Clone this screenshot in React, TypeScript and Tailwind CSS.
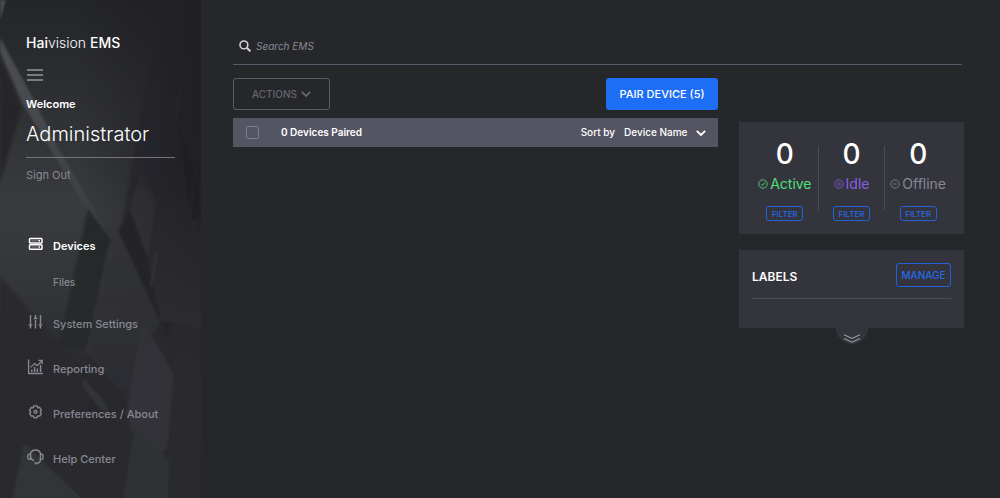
import type { ReactNode } from "react"
import { useState } from "react"
import clsx from "clsx"

interface NavItem {
  label: string
  icon: ReactNode
  children?: string[]
}

const navItems: NavItem[] = [
  { label: "Devices", icon: <DevicesIcon />, children: ["Files"] },
  { label: "System Settings", icon: <SlidersIcon /> },
  { label: "Reporting", icon: <ReportIcon /> },
  { label: "Preferences / About", icon: <GearIcon /> },
  { label: "Help Center", icon: <HeadsetIcon /> },
]

const stats = [
  { label: "Active", count: 0, color: "text-[#4fe07c]", icon: <path d="M4 6.2 5.5 7.8 8.2 4" /> },
  { label: "Idle", count: 0, color: "text-[#8a5fe6]", icon: <path d="M4.8 3.8v4.4M7.2 3.8v4.4" /> },
  { label: "Offline", count: 0, color: "text-[#888893]", icon: <path d="M4 6h4" /> },
]

function DevicesIcon() {
  return (
    <svg viewBox="0 0 20 20" className="size-5" fill="none" stroke="currentColor" strokeWidth="1.5">
      <rect x="3.5" y="4.5" width="12.5" height="4.6" rx="0.8" />
      <rect x="3.5" y="10.7" width="12.5" height="4.6" rx="0.8" />
      <path d="M5.5 6.8h6M5.5 13h6" strokeWidth="0.6" opacity="0.6" />
      <path d="M12.4 6.8h1.6M12.4 13h1.6" />
    </svg>
  )
}

function SlidersIcon() {
  return (
    <svg viewBox="0 0 20 20" className="size-5" fill="none" stroke="currentColor" strokeWidth="1.4">
      <path d="M4.5 3v9M4.5 14v2.5M9.5 3v3M9.5 8v8.5M14.5 3v9M14.5 14v2.5" />
      <path d="M2.2 12.2h4.6L4.5 15.2zM7.2 7.3h4.6L9.5 4.3zM12.2 12.2h4.6l-2.3 3z" fill="currentColor" stroke="none" />
    </svg>
  )
}

function ReportIcon() {
  return (
    <svg viewBox="0 0 20 20" className="size-5" fill="none" stroke="currentColor" strokeWidth="1.3">
      <path d="M2.6 2.5v14h14.2" />
      <path d="M5.8 15v-2.5M8.6 15v-5M11.4 15v-3.5M14.6 15V8" strokeWidth="1.5" />
      <path d="M4.6 10.4 8.6 6.6l2.6 2L15.8 4" />
      <path d="M12.4 3.4h3.8v3.8" />
    </svg>
  )
}

function GearIcon() {
  return (
    <svg viewBox="0 0 20 20" className="size-5" fill="none" stroke="currentColor" strokeWidth="1.4" strokeLinejoin="round">
      <path d="M8 3.9h3l.8 1.8 2-.2 1.6 2.6-1.2 1.7 1.2 1.7-1.6 2.6-2-.2-.8 1.8H8l-.8-1.8-2 .2-1.6-2.6 1.2-1.7-1.2-1.7 1.6-2.6 2 .2z" />
      <circle cx="9.5" cy="9.8" r="1.4" />
    </svg>
  )
}

function HeadsetIcon() {
  return (
    <svg viewBox="0 0 20 20" className="size-5" fill="none" stroke="currentColor" strokeWidth="1.4">
      <path d="M4.2 7.3a5.4 5.4 0 0 1 10.6 0" />
      <path d="M4.6 7.2v5.2H3.4a1.4 1.4 0 0 1-1.4-1.4V8.6a1.4 1.4 0 0 1 1.4-1.4zM14.4 7.2v5.2h1.2A1.4 1.4 0 0 0 17 11V8.6a1.4 1.4 0 0 0-1.4-1.4z" />
      <path d="M4.8 10.5c.6 1.8 1.8 2.8 3.2 3.4M14.6 12.4c-.3 2.4-1.8 3.8-4 4" />
      <path d="M8.6 16.4h2.2" strokeWidth="2" />
    </svg>
  )
}

function Chevron({ className }: { className?: string }) {
  return (
    <svg viewBox="0 0 10 6" className={clsx("h-1.5 w-2.5", className)} fill="none" stroke="currentColor" strokeWidth="1.8">
      <path d="M.8.8 5 5 9.2.8" />
    </svg>
  )
}

// Faceted glass artwork behind the navigation
function SidebarArt() {
  return (
    <svg
      viewBox="0 0 201 498"
      preserveAspectRatio="none"
      className="absolute inset-0 -z-10 size-full"
      aria-hidden="true"
    >
      <defs>
        <linearGradient id="base" x1="0" y1="0" x2="0" y2="1">
          <stop offset="0" stopColor="#242529" />
          <stop offset="0.42" stopColor="#393b3f" />
          <stop offset="0.6" stopColor="#323438" />
          <stop offset="0.75" stopColor="#29292c" />
          <stop offset="1" stopColor="#28292b" />
        </linearGradient>
        <linearGradient id="shade" x1="0" y1="0" x2="1" y2="0">
          <stop offset="0.4" stopColor="#1d1d21" stopOpacity="0" />
          <stop offset="1" stopColor="#1d1d21" stopOpacity="0.75" />
        </linearGradient>
        <linearGradient id="shadeFade" x1="0" y1="0" x2="0" y2="1">
          <stop offset="0" stopColor="#fff" />
          <stop offset="0.35" stopColor="#fff" />
          <stop offset="0.7" stopColor="#000" />
        </linearGradient>
        <mask id="shadeMask">
          <rect width="201" height="498" fill="url(#shadeFade)" />
        </mask>
        <linearGradient id="facet" x1="0" y1="0" x2="0" y2="1">
          <stop offset="0" stopColor="#36383c" />
          <stop offset="1" stopColor="#2a2b2e" />
        </linearGradient>
        <linearGradient id="streak" x1="0" y1="0" x2="0" y2="1">
          <stop offset="0" stopColor="#62656a" stopOpacity="0.6" />
          <stop offset="0.4" stopColor="#62656a" stopOpacity="0.45" />
          <stop offset="1" stopColor="#62656a" stopOpacity="0" />
        </linearGradient>
        <filter id="soft">
          <feGaussianBlur stdDeviation="0.8" />
        </filter>
      </defs>
      <rect width="201" height="498" fill="url(#base)" />
      <g filter="url(#soft)">
        <path d="M0 58 22 108 0 182z" fill="#26272b" />
        <path d="M0 38v14l22 50 64 106 28 34-58-98-24-48z" fill="url(#streak)" />
        <path d="M0 0h6L0 20z" fill="#4a4c50" />
        <path d="M0 276 60 346 90 380 80 498H0z" fill="#29292d" />
        <path d="m88 208 26 36-25 104H58z" fill="#28292c" />
        <path d="M156 30 119 240l-30 110 116 20V0h-40z" fill="#28292d" opacity="0.75" />
        <path d="m120 226-12 20-22 104 50 60 6-60 26-40z" fill="url(#facet)" />
        <path d="m130 210 11-43 15 34-7 54-2 0z" fill="#35363b" />
        <path d="m118 230 12-20 24 66 18 48-4 14z" fill="#26262a" />
        <path d="m160 200 30 8 11 40v80l-40-8-14-60z" fill="#2d2d31" />
        <path d="m155 66 22 48-16 86-30-18z" fill="#2c2d31" opacity="0.5" />
        <path d="m177 114 20 52 4 50-10 4z" fill="#222327" />
        <path d="m180 90-4 25 20 52-6 50 11 24" fill="none" stroke="#3a3b41" />
        <path d="m157 250-6 36" stroke="#3b3c42" strokeWidth="1.5" />
        <path d="m109 250-24 106" stroke="#34353a" />
        <path d="m84 378 20 22 6 14-12-8-16-22z" fill="#323437" />
        <path d="m138 345 4-26 32 54-6 72-44 53 10-66-8-18z" fill="#303337" />
        <path d="m125 418 12 14-14 66H60l14-90z" fill="#2a2b2d" />
        <path d="m24 442 58 56H12z" fill="#313436" />
        <path d="m126 420 46 40-4 38h-46l12-64z" fill="#2e3032" />
        <path d="m174 350 27 10v138h-33z" fill="#29292d" />
      </g>
      <rect width="201" height="498" fill="url(#shade)" mask="url(#shadeMask)" />
    </svg>
  )
}

function Sidebar() {
  return (
    <aside className="relative isolate w-[201px] shrink-0 px-[26px] pt-8 pb-7">
      <SidebarArt />
      <h1 className="text-[14px] leading-[22px] whitespace-nowrap text-white">
        <span className="font-medium">Hai</span>
        <span className="font-light">vision</span> <span className="font-medium">EMS</span>
      </h1>
      <button type="button" aria-label="Toggle menu" className="mt-3 flex h-[18px] items-center px-px">
        <svg viewBox="0 0 16 12" className="h-3 w-4" stroke="#9294a0" strokeWidth="1.6">
          <path d="M0 1h16M0 6h16M0 11h16" />
        </svg>
      </button>
      <p className="mt-3 text-[11px] leading-4 font-semibold text-white">Welcome</p>
      <p className="mt-2 border-b border-[#73747c] pb-[9px] text-[20px] leading-7 font-light text-white">
        Administrator
      </p>
      <a href="#signout" className="mt-[9px] block text-[11px] leading-4 text-[#888893]">
        Sign Out
      </a>
      <nav className="mt-[51px] text-[11px] font-medium whitespace-nowrap text-[#888893]">
        <ul className="flex flex-col gap-[21px]">
          {navItems.map((item, i) => (
            <li key={item.label}>
              <a href="#" className={clsx("flex h-6 items-start gap-[7px]", i === 0 && "font-semibold text-white")}>
                {item.icon}
                <span className="leading-6">{item.label}</span>
              </a>
              {item.children?.map((child) => (
                <a key={child} href="#" className="mt-[15px] block pl-[27px] text-[10px] leading-[18px]">
                  {child}
                </a>
              ))}
            </li>
          ))}
        </ul>
      </nav>
    </aside>
  )
}

function StatusPanel() {
  return (
    <section className="flex bg-[#34343c] px-[13px] pt-6 pb-[13px]">
      {stats.map((stat, i) => (
        <div key={stat.label} className="contents">
          {i > 0 && <div className="h-16 w-px shrink-0 bg-[#4c4c58]" />}
          <div className="flex flex-1 basis-0 flex-col items-center">
            <span className="text-[28px] leading-4 font-medium text-white">{stat.count}</span>
            <span className={clsx("mt-3 flex items-center gap-0.5 text-[14px] leading-5", stat.color)}>
              <svg viewBox="0 0 12 12" className="size-[10px]" fill="none" stroke="currentColor">
                <circle cx="6" cy="6" r="5" />
                {stat.icon}
              </svg>
              {stat.label}
            </span>
            <button
              type="button"
              className="mt-3 flex h-[15px] w-[37px] items-center justify-center rounded-[3px] border border-[#2063d8] text-[8px] font-medium text-[#2669e8]"
            >
              FILTER
            </button>
          </div>
        </div>
      ))}
    </section>
  )
}

function LabelsPanel() {
  return (
    <section className="relative mt-4 bg-[#34343c] px-[13px] pt-[13px] pb-[29px]">
      <div className="flex items-end justify-between border-b border-[#4c4c58] pb-[11px]">
        <h2 className="text-[12px] leading-5 font-semibold text-white">LABELS</h2>
        <button
          type="button"
          className="flex h-6 w-[55px] items-center justify-center rounded-[3px] border border-[#2063d8] text-[10px] font-medium text-[#2669e8]"
        >
          MANAGE
        </button>
      </div>
      <button
        type="button"
        aria-label="Expand labels"
        className="absolute top-full left-1/2 flex h-4 w-8 -translate-x-1/2 justify-center rounded-b-full bg-[#34343c] pt-1.5"
      >
        <svg viewBox="0 0 18 9" className="h-[9px] w-[18px] shrink-0" fill="none" stroke="#a0a0aa" strokeWidth="1.1">
          <path d="m1 .8 8 3.6 8-3.6M1 4.6l8 3.6 8-3.6" />
        </svg>
      </button>
    </section>
  )
}

export default function App() {
  const [query, setQuery] = useState("")

  return (
    <div className="flex min-h-screen bg-[#26272b] font-[Inter,sans-serif]">
      <Sidebar />
      <main className="min-w-0 flex-1 pt-7 pr-9 pl-8">
        <label className="mr-0.5 flex h-[37px] items-center gap-[5px] border-b border-[#5a5a6a] pl-1.5">
          <svg viewBox="0 0 12 12" className="size-3 shrink-0" fill="none" stroke="#d0d0d6" strokeWidth="1.6">
            <circle cx="4.9" cy="4.9" r="3.9" />
            <path d="m7.8 7.8 3.6 3.6" strokeWidth="2" />
          </svg>
          <input
            type="search"
            aria-label="Search EMS"
            placeholder="Search EMS"
            value={query}
            onChange={(e) => setQuery(e.target.value)}
            className="w-full bg-transparent text-[10px] text-white italic outline-none placeholder:text-[#888893]"
          />
        </label>

        <div className="flex items-start gap-[21px]">
          <section className="min-w-0 flex-1 pt-[13px]">
            <div className="flex justify-between">
              <button
                type="button"
                className="flex h-8 w-[97px] items-center justify-center gap-1 rounded-[3px] border border-[#5c5c66] text-[10px] font-medium text-[#65656f]"
              >
                ACTIONS
                <Chevron />
              </button>
              <button
                type="button"
                className="h-8 w-28 rounded-[3px] bg-[#1e6ef5] text-[11px] font-medium text-white"
              >
                PAIR DEVICE (5)
              </button>
            </div>
            <div className="mt-2 flex h-[29px] items-center bg-[#545463] pr-3 pl-[13px] text-[10px] text-white">
              <input
                type="checkbox"
                aria-label="Select all devices"
                className="size-[13px] appearance-none rounded-[2px] border border-[#7c7c8a] checked:bg-[#1e6ef5]"
              />
              <span className="ml-[22px] font-semibold">0 Devices Paired</span>
              <label htmlFor="sort" className="ml-auto font-medium">
                Sort by
              </label>
              <div className="relative ml-[9px] flex items-center">
                <select id="sort" className="appearance-none bg-transparent pr-[18px] font-medium outline-none">
                  <option>Device Name</option>
                </select>
                <Chevron className="pointer-events-none absolute right-0" />
              </div>
            </div>
          </section>

          <div className="w-[225px] shrink-0 pt-[57px]">
            <StatusPanel />
            <LabelsPanel />
          </div>
        </div>
      </main>
    </div>
  )
}
